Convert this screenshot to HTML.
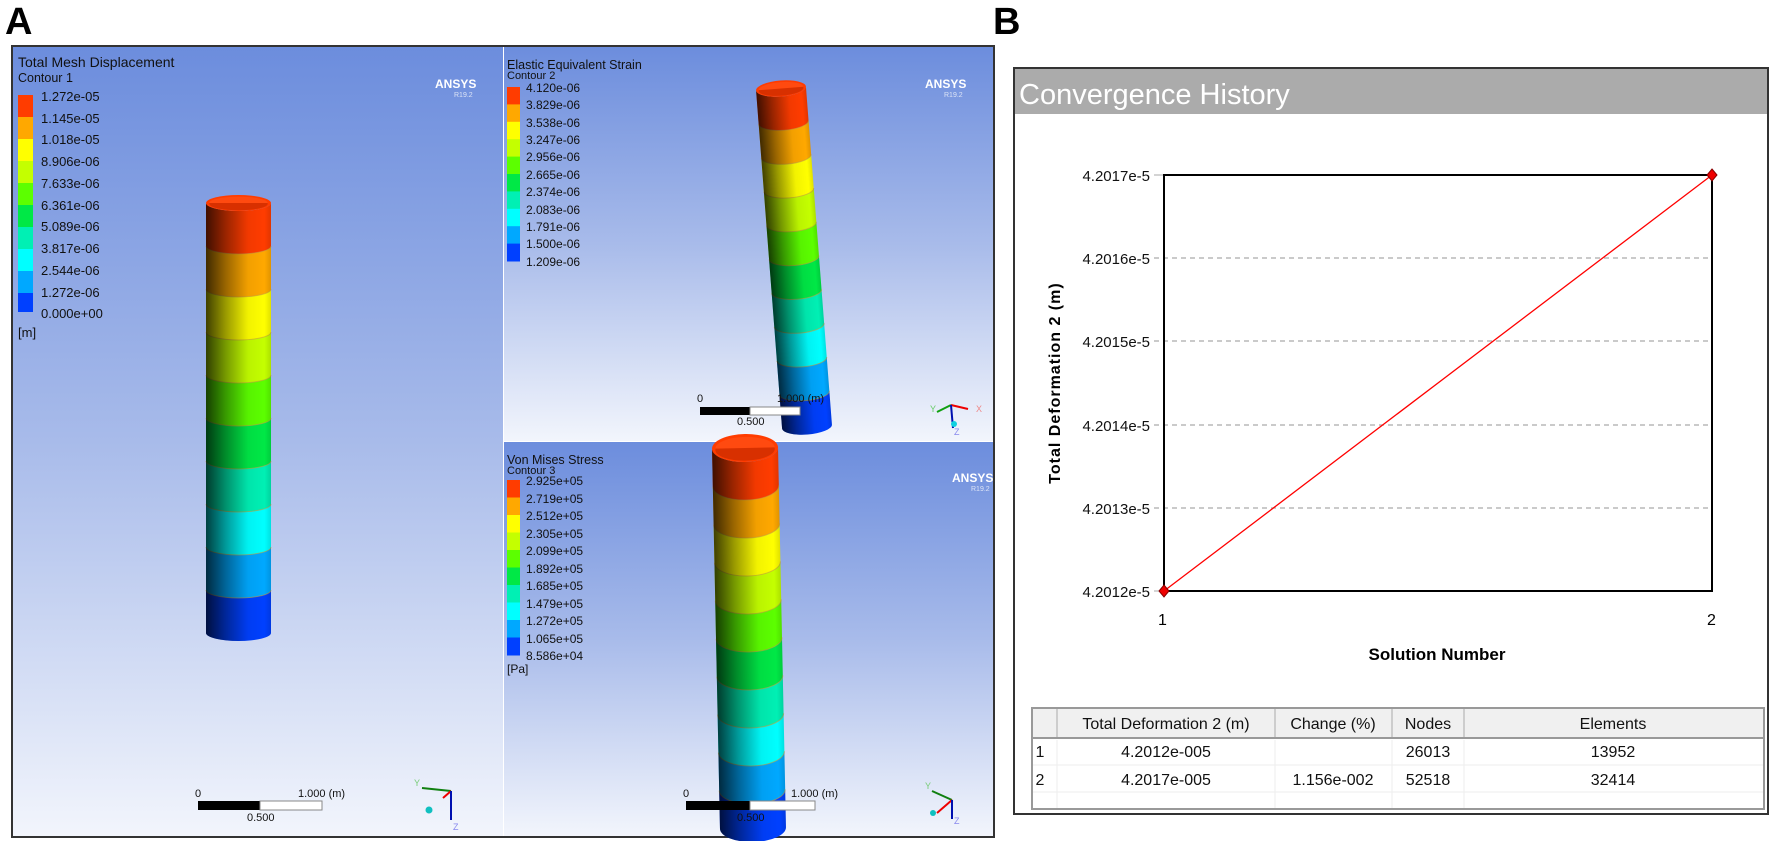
<!DOCTYPE html>
<html><head><meta charset="utf-8"><style>
html,body{margin:0;padding:0;background:#fff;}
body{width:1772px;height:841px;overflow:hidden;position:relative;font-family:"Liberation Sans",sans-serif;}
svg{position:absolute;left:0;top:0;}
</style></head><body>
<svg id="s" width="1772" height="841" viewBox="0 0 1772 841" xmlns="http://www.w3.org/2000/svg" font-family="Liberation Sans, sans-serif">
<defs>
<linearGradient id="bg" x1="0" y1="0" x2="0" y2="1"><stop offset="0" stop-color="#6c8ddd"/><stop offset="0.5" stop-color="#a8bbea"/><stop offset="1" stop-color="#f2f5fc"/></linearGradient>
<linearGradient id="sh" x1="0" y1="0" x2="1" y2="0"><stop offset="0" stop-color="#000" stop-opacity="0.75"/><stop offset="0.3" stop-color="#000" stop-opacity="0.4"/><stop offset="0.65" stop-color="#000" stop-opacity="0.05"/><stop offset="0.9" stop-color="#000" stop-opacity="0"/><stop offset="1" stop-color="#000" stop-opacity="0.12"/></linearGradient>
</defs>
<text x="5" y="34" font-size="38" font-weight="bold">A</text>
<text x="993" y="34" font-size="38" font-weight="bold">B</text>
<rect x="12" y="46" width="982" height="791" fill="#fff" stroke="#333" stroke-width="2"/>
<rect x="13" y="47" width="490" height="789" fill="url(#bg)"/>
<rect x="504" y="47" width="489" height="394" fill="url(#bg)"/>
<rect x="504" y="442" width="489" height="394" fill="url(#bg)"/>
<g id="cyl"></g>
<g font-size="13" fill="#111">
<text x="18" y="67" font-size="14">Total Mesh Displacement</text>
<text x="18" y="82" font-size="12.5">Contour 1</text>
<rect x="18" y="95" width="15" height="22" fill="#ff3c00"/><rect x="18" y="117" width="15" height="22" fill="#ffa800"/><rect x="18" y="139" width="15" height="22" fill="#ffff00"/><rect x="18" y="161" width="15" height="22" fill="#c4ff00"/><rect x="18" y="183" width="15" height="22" fill="#5cff00"/><rect x="18" y="205" width="15" height="22" fill="#00e846"/><rect x="18" y="227" width="15" height="22" fill="#00f0b4"/><rect x="18" y="249" width="15" height="22" fill="#00ffff"/><rect x="18" y="271" width="15" height="22" fill="#00a8ff"/><rect x="18" y="293" width="15" height="19" fill="#0040ff"/>
<text x="41" y="101">1.272e-05</text><text x="41" y="123">1.145e-05</text><text x="41" y="144">1.018e-05</text><text x="41" y="166">8.906e-06</text><text x="41" y="188">7.633e-06</text><text x="41" y="210">6.361e-06</text><text x="41" y="231">5.089e-06</text><text x="41" y="253">3.817e-06</text><text x="41" y="275">2.544e-06</text><text x="41" y="297">1.272e-06</text><text x="41" y="318">0.000e+00</text>
<text x="18" y="337">[m]</text>
</g>
<g font-size="12" fill="#111">
<text x="507" y="69" font-size="12.5">Elastic Equivalent Strain</text>
<text x="507" y="79" font-size="11">Contour 2</text>
<g id="lg2"></g>
<text x="526" y="92">4.120e-06</text><text x="526" y="109">3.829e-06</text><text x="526" y="127">3.538e-06</text><text x="526" y="144">3.247e-06</text><text x="526" y="161">2.956e-06</text><text x="526" y="179">2.665e-06</text><text x="526" y="196">2.374e-06</text><text x="526" y="214">2.083e-06</text><text x="526" y="231">1.791e-06</text><text x="526" y="248">1.500e-06</text><text x="526" y="266">1.209e-06</text>
<text x="507" y="464" font-size="12.5">Von Mises Stress</text>
<text x="507" y="474" font-size="11">Contour 3</text>
<g id="lg3"></g>
<text x="526" y="485">2.925e+05</text><text x="526" y="503">2.719e+05</text><text x="526" y="520">2.512e+05</text><text x="526" y="538">2.305e+05</text><text x="526" y="555">2.099e+05</text><text x="526" y="573">1.892e+05</text><text x="526" y="590">1.685e+05</text><text x="526" y="608">1.479e+05</text><text x="526" y="625">1.272e+05</text><text x="526" y="643">1.065e+05</text><text x="526" y="660">8.586e+04</text>
<text x="507" y="673">[Pa]</text>
</g>
<g fill="#fff" font-weight="bold" font-size="12"><text x="435" y="88">ANSYS</text><text x="925" y="88">ANSYS</text><text x="952" y="482">ANSYS</text></g>
<g fill="#dde4f6" font-size="7"><text x="454" y="97">R19.2</text><text x="944" y="97">R19.2</text><text x="971" y="491">R19.2</text></g>
<g font-size="11" fill="#111">
<rect x="198" y="801" width="62" height="9" fill="#000"/><rect x="260" y="801" width="62" height="9" fill="#fff" stroke="#888"/>
<text x="195" y="797">0</text><text x="298" y="797">1.000  (m)</text><text x="247" y="821">0.500</text>
<rect x="686" y="801" width="64" height="9" fill="#000"/><rect x="750" y="801" width="65" height="9" fill="#fff" stroke="#888"/>
<text x="683" y="797">0</text><text x="791" y="797">1.000  (m)</text><text x="737" y="821">0.500</text>
<rect x="700" y="407" width="50" height="8" fill="#000"/><rect x="750" y="407" width="50" height="8" fill="#fff" stroke="#888"/>
<text x="697" y="402">0</text><text x="777" y="402">1.000  (m)</text><text x="737" y="425">0.500</text>
</g>
<g stroke-width="2" fill="none">
<line x1="451" y1="791" x2="422" y2="788" stroke="#108010"/><line x1="451" y1="791" x2="443" y2="798" stroke="#e00"/><line x1="451" y1="791" x2="451" y2="820" stroke="#0010b0"/>
<line x1="951" y1="405" x2="937" y2="412" stroke="#10a010"/><line x1="951" y1="405" x2="968" y2="409" stroke="#e00"/><line x1="951" y1="405" x2="953" y2="428" stroke="#0010b0"/>
<line x1="952" y1="800" x2="932" y2="791" stroke="#108010"/><line x1="952" y1="800" x2="937" y2="813" stroke="#e00"/><line x1="952" y1="800" x2="952" y2="819" stroke="#0010b0"/>
</g>
<circle cx="429" cy="810" r="3.5" fill="#10c0c0"/><circle cx="954" cy="424" r="3" fill="#10d0e0"/><circle cx="933" cy="813" r="3" fill="#10c0c0"/>
<g font-size="9"><text x="414" y="786" fill="#7c7">Y</text><text x="453" y="830" fill="#88e">Z</text><text x="976" y="412" fill="#e88">X</text><text x="930" y="412" fill="#6c6">Y</text><text x="954" y="435" fill="#88e">Z</text><text x="925" y="789" fill="#7c7">Y</text><text x="954" y="824" fill="#88e">Z</text></g>

<rect x="1014" y="68" width="754" height="746" fill="#fff" stroke="#333" stroke-width="2"/>
<rect x="1015" y="69" width="752" height="45" fill="#ababab"/>
<text x="1019" y="104" font-size="29" fill="#fff">Convergence History</text>
<g stroke="#aaa" stroke-dasharray="5,4" stroke-width="1.3">
<line x1="1154" y1="258" x2="1712" y2="258"/><line x1="1154" y1="341" x2="1712" y2="341"/><line x1="1154" y1="425" x2="1712" y2="425"/><line x1="1154" y1="508" x2="1712" y2="508"/>
</g>
<line x1="1154" y1="175" x2="1164" y2="175" stroke="#aaa"/><line x1="1154" y1="591" x2="1164" y2="591" stroke="#aaa"/>
<rect x="1164" y="175" width="548" height="416" fill="none" stroke="#000" stroke-width="2"/>
<line x1="1164" y1="591" x2="1712" y2="175" stroke="#f00" stroke-width="1.3"/>
<path d="M1164 585 L1169 591 L1164 597 L1159 591Z" fill="#e00" stroke="#800"/>
<path d="M1712 169 L1717 175 L1712 181 L1707 175Z" fill="#e00" stroke="#800"/>
<g font-size="15" text-anchor="end" fill="#111">
<text x="1150" y="181">4.2017e-5</text><text x="1150" y="264">4.2016e-5</text><text x="1150" y="347">4.2015e-5</text><text x="1150" y="431">4.2014e-5</text><text x="1150" y="514">4.2013e-5</text><text x="1150" y="597">4.2012e-5</text>
</g>
<text x="1158" y="625" font-size="16">1</text><text x="1707" y="625" font-size="16">2</text>
<text x="1437" y="660" font-size="17" font-weight="bold" text-anchor="middle">Solution Number</text>
<text transform="translate(1060,383) rotate(-90)" font-size="16" font-weight="bold" text-anchor="middle" letter-spacing="1">Total Deformation 2  (m)</text>
<rect x="1032" y="708" width="732" height="101" fill="#fff" stroke="#999" stroke-width="2"/>
<rect x="1033" y="709" width="730" height="28" fill="#f0f0f0"/>
<line x1="1033" y1="738" x2="1763" y2="738" stroke="#999" stroke-width="2"/>
<g stroke="#aaa"><line x1="1057" y1="709" x2="1057" y2="737"/><line x1="1275" y1="709" x2="1275" y2="737"/><line x1="1392" y1="709" x2="1392" y2="737"/><line x1="1464" y1="709" x2="1464" y2="737"/></g>
<g stroke="#eee"><line x1="1057" y1="740" x2="1057" y2="808"/><line x1="1275" y1="740" x2="1275" y2="808"/><line x1="1392" y1="740" x2="1392" y2="808"/><line x1="1464" y1="740" x2="1464" y2="808"/><line x1="1033" y1="765" x2="1763" y2="765"/><line x1="1033" y1="792" x2="1763" y2="792"/></g>
<g font-size="16" fill="#111" text-anchor="middle">
<text x="1166" y="729">Total Deformation 2 (m)</text><text x="1333" y="729">Change (%)</text><text x="1428" y="729">Nodes</text><text x="1613" y="729">Elements</text>
<text x="1166" y="757">4.2012e-005</text><text x="1428" y="757">26013</text><text x="1613" y="757">13952</text>
<text x="1166" y="785">4.2017e-005</text><text x="1333" y="785">1.156e-002</text><text x="1428" y="785">52518</text><text x="1613" y="785">32414</text>
<text x="1040" y="757">1</text><text x="1040" y="785">2</text>
</g>
</svg>
<script>
var C=["#ff3c00","#ffa800","#ffff00","#c4ff00","#5cff00","#00e846","#00f0b4","#00ffff","#00a8ff","#0040ff"];
var NS="http://www.w3.org/2000/svg";
function el(p,t,a){var e=document.createElementNS(NS,t);for(var k in a)e.setAttribute(k,a[k]);p.appendChild(e);return e;}
function cyl(cx,top,bot,rx,ry,rot){
 var g=el(document.getElementById("cyl"),"g",{transform:"rotate("+rot+" "+cx+" "+((top+bot)/2)+")"});
 var x0=cx-rx,x1=cx+rx,h=(bot-top)/10;
 for(var i=0;i<10;i++){var a=top+i*h,b=a+h+(i<9?1:0);
  el(g,"path",{d:"M"+x0+" "+a+" A"+rx+" "+ry+" 0 0 0 "+x1+" "+a+" L"+x1+" "+b+" A"+rx+" "+ry+" 0 0 1 "+x0+" "+b+"Z",fill:C[i]});
  if(i>0)el(g,"path",{d:"M"+x0+" "+a+" A"+rx+" "+ry+" 0 0 0 "+x1+" "+a,fill:"none",stroke:"#c8a040","stroke-width":"1","stroke-opacity":"0.6"});}
 el(g,"path",{d:"M"+x0+" "+top+" A"+rx+" "+ry+" 0 0 0 "+x1+" "+top+" L"+x1+" "+bot+" A"+rx+" "+ry+" 0 0 1 "+x0+" "+bot+"Z",fill:"url(#sh)"});
 el(g,"ellipse",{cx:cx,cy:top,rx:rx,ry:ry,fill:"#ff3c00"});
 el(g,"ellipse",{cx:cx,cy:top+ry*0.1,rx:rx*0.9,ry:ry*0.8,fill:"#d83000"});
 el(g,"path",{d:"M"+(cx-rx*0.9)+" "+top+" A"+rx*0.9+" "+ry*0.8+" 0 0 1 "+(cx+rx*0.9)+" "+top+"Z",fill:"#ff4a10"});
}
cyl(238.5,203,633,32.5,8,0);
cyl(794,88,427,25,8,-4.4);
cyl(749,448,828,33,14,-1.2);
function lg(id,y0,hh){var g=document.getElementById(id);for(var i=0;i<10;i++)el(g,"rect",{x:507,y:y0+i*hh,width:13,height:hh+0.5,fill:C[i]});}
lg("lg2",87,17.4);lg("lg3",480,17.5);
</script>
</body></html>
